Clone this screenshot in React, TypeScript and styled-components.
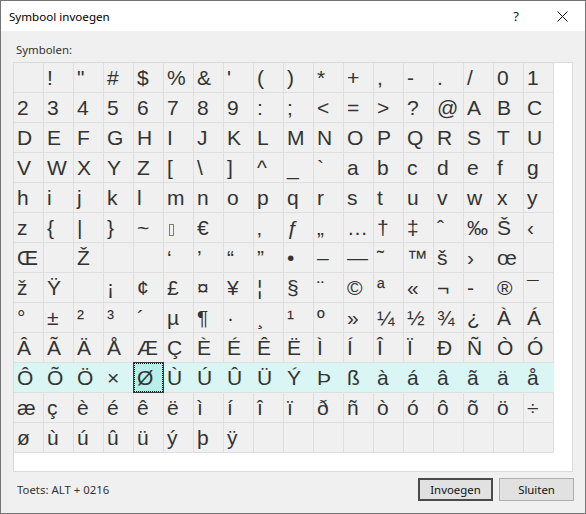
import React from "react";
import styled, { createGlobalStyle } from "styled-components";

const GlobalStyle = createGlobalStyle`
  html, body {
    margin: 0;
    padding: 0;
    background: #ffffff;
  }
`;

const uiFont = `"Noto Sans", "Liberation Sans", Arial, sans-serif`;

// Windows-1252 0x80..0x9F (empty where undefined)
const cp1252High = [
  "€", "", "‚", "ƒ", "„", "…", "†", "‡", "ˆ", "‰", "Š", "‹", "Œ", "", "Ž", "",
  "", "‘", "’", "“", "”", "•", "–", "—", "˜", "™", "š", "›", "œ", "", "ž", "Ÿ",
];

type Symbol = { code: number; ch: string };

const buildSymbols = (): Symbol[] => {
  const list: Symbol[] = [];
  for (let code = 0x20; code <= 0xff; code++) {
    let ch = String.fromCharCode(code);
    if (code === 0x20 || code === 0xa0) ch = "";
    else if (code === 0x7f) ch = "BOX";
    else if (code >= 0x80 && code <= 0x9f) ch = cp1252High[code - 0x80];
    else if (code === 0xad) ch = "-";
    list.push({ code, ch });
  }
  while (list.length < 18 * 13) list.push({ code: -1, ch: "" });
  return list;
};

const symbols = buildSymbols();
const SELECTED = 0xd8;
const HIGHLIGHT_ROW = 10;

const Window = styled.div`
  width: 586px;
  height: 514px;
  box-sizing: border-box;
  border: 1px solid #747474;
  background: #f0f0f0;
  font-family: ${uiFont};
  font-size: 11.4px;
  color: #1a1a1a;
  display: flex;
  flex-direction: column;
`;

const TitleBar = styled.div`
  height: 30px;
  background: #ffffff;
  display: flex;
  align-items: center;
  flex-shrink: 0;
`;

const Title = styled.div`
  flex: 1;
  padding-left: 8px;
  font-size: 11.6px;
  color: #000;
`;

const TitleButton = styled.div`
  width: 46px;
  height: 30px;
  display: flex;
  align-items: center;
  justify-content: center;
  font-size: 13px;
  color: #111;
`;

const Body = styled.div`
  padding: 0 11px 0 12px;
  display: flex;
  flex-direction: column;
`;

const Label = styled.div`
  margin: 11px 0 4px 3px;
  height: 16px;
  line-height: 16px;
  color: #333;
`;

const SymbolBox = styled.div`
  width: 560px;
  height: 410px;
  box-sizing: border-box;
  border: 1px solid #dadada;
  background: #ffffff;
`;

const Grid = styled.div`
  display: grid;
  grid-template-columns: repeat(18, 30px);
  grid-auto-rows: 30px;
`;

const Cell = styled.div<{ $highlight: boolean; $selected: boolean }>`
  position: relative;
  box-sizing: border-box;
  width: 30px;
  height: 30px;
  padding-left: 3px;
  border-right: 1px solid ${(p) => (p.$highlight ? "#d9f5f4" : "#dedede")};
  border-bottom: 1px solid #dedede;
  background: ${(p) => (p.$selected ? "#b8efea" : p.$highlight ? "#d9f5f4" : "#f0f0f0")};
  font-family: "Liberation Sans", Arial, sans-serif;
  font-size: 21px;
  line-height: 29px;
  color: #333;
  white-space: nowrap;
  overflow: hidden;

  ${(p) =>
    p.$selected &&
    `
    overflow: visible;
    &::before {
      content: "";
      position: absolute;
      left: -1px;
      top: -1px;
      right: -1px;
      bottom: -1px;
      border: 1px solid #3c3c3c;
    }
    &::after {
      content: "";
      position: absolute;
      left: 0;
      top: 0;
      right: 0;
      bottom: 0;
      border: 1px dotted #000;
    }
  `}
`;

const DelGlyph = styled.span`
  display: inline-block;
  width: 3px;
  height: 10px;
  margin-left: 2px;
  border: 1px solid #8a7a6a;
  vertical-align: -1px;
`;

const Footer = styled.div`
  margin-top: 6px;
  height: 23px;
  display: flex;
  align-items: center;
`;

const KeyInfo = styled.div`
  flex: 1;
  padding-left: 4px;
  color: #333;
`;

const Button = styled.div<{ $default?: boolean }>`
  width: 75px;
  height: 23px;
  box-sizing: border-box;
  margin-left: ${(p) => (p.$default ? "0" : "6px")};
  border: ${(p) => (p.$default ? "2px solid #4a4a4a" : "1px solid #adadad")};
  background: #e1e1e1;
  display: flex;
  align-items: center;
  justify-content: center;
  color: #111;
`;

const CloseIcon = () => (
  <svg width="11" height="11" viewBox="0 0 11 11">
    <path d="M0.5 0.5 L10.5 10.5 M10.5 0.5 L0.5 10.5" stroke="#111" strokeWidth="1" fill="none" />
  </svg>
);

const App = () => {
  return (
    <>
      <GlobalStyle />
      <Window>
        <TitleBar>
          <Title>Symbool invoegen</Title>
          <TitleButton>?</TitleButton>
          <TitleButton>
            <CloseIcon />
          </TitleButton>
        </TitleBar>
        <Body>
          <Label>Symbolen:</Label>
          <SymbolBox>
            <Grid>
              {symbols.map((s, i) => (
                <Cell
                  key={i}
                  $highlight={Math.floor(i / 18) === HIGHLIGHT_ROW}
                  $selected={s.code === SELECTED}
                >
                  {s.ch === "BOX" ? <DelGlyph /> : s.ch}
                </Cell>
              ))}
            </Grid>
          </SymbolBox>
          <Footer>
            <KeyInfo>Toets: ALT + 0216</KeyInfo>
            <Button $default>Invoegen</Button>
            <Button>Sluiten</Button>
          </Footer>
        </Body>
      </Window>
    </>
  );
};

export default App;
